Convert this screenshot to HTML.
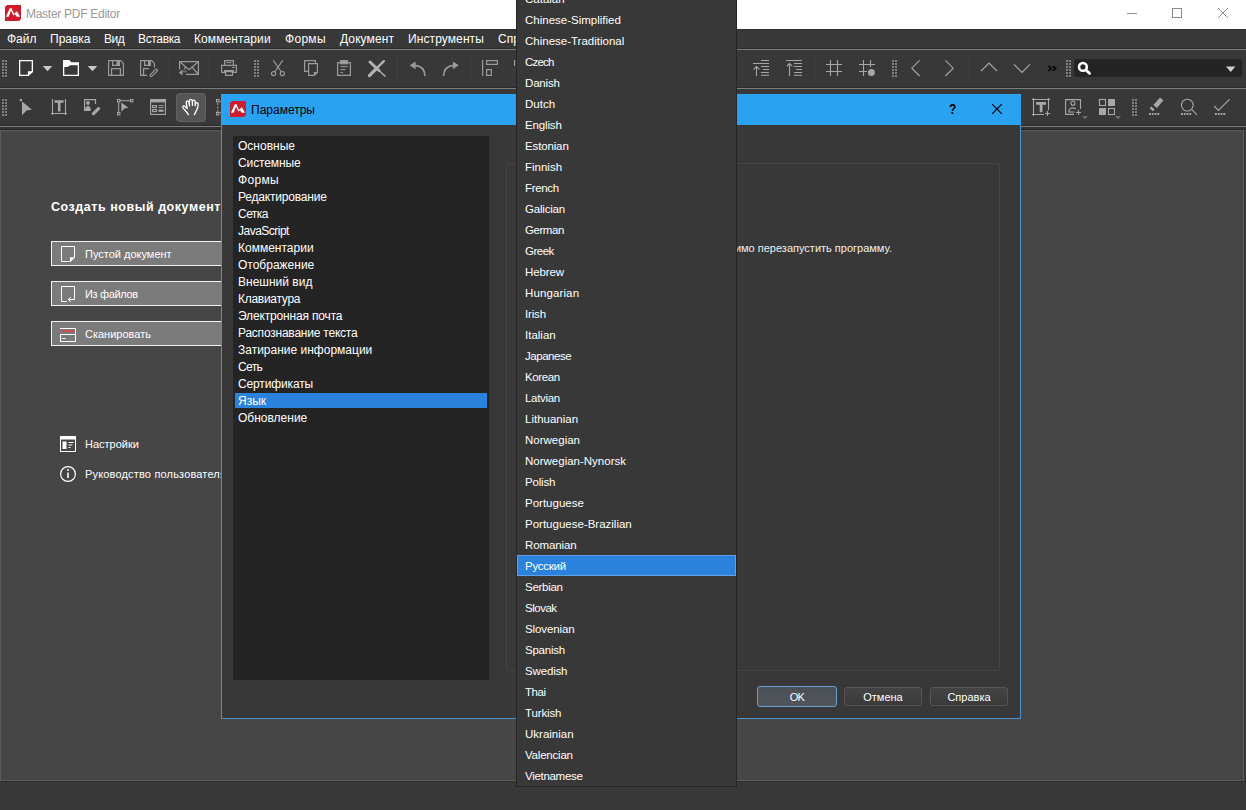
<!DOCTYPE html>
<html lang="ru">
<head>
<meta charset="utf-8">
<title>Master PDF Editor</title>
<style>
*{box-sizing:border-box;margin:0;padding:0}
html,body{width:1246px;height:810px;overflow:hidden;background:#383838}
body{position:relative;font-family:"Liberation Sans",sans-serif;font-size:12px;color:#fff;-webkit-font-smoothing:antialiased}
.abs{position:absolute}
.t{position:absolute;white-space:nowrap;line-height:14px;height:14px}
svg{position:absolute;overflow:visible}
#titlebar{left:0;top:0;width:1246px;height:29px;background:#fff}
#menubar{left:0;top:29px;width:1246px;height:20px;background:#383838}
.hl{position:absolute;left:0;width:1246px;height:2px;background:linear-gradient(#2c2c2c 0 1px,#7c7c7c 1px 2px)}
#main{left:0;top:130px;width:1244px;height:651px;background:#464646;border:1px solid #5c5c5c}
#status{left:0;top:781px;width:1246px;height:29px;background:#383838;border-top:1px solid #2e2e2e}
.m{top:32px;color:#fff;font-size:12px}
.grip{position:absolute;width:5px;height:17px;background-image:radial-gradient(circle,#8a8a8a 0.9px,transparent 1.1px);background-size:3px 2.5px}
.sep{position:absolute;width:1px;height:22px;background:#444}
/* welcome */
.wbtn{position:absolute;left:51px;width:200px;height:25px;background:#7b7b7b;border:1px solid #f2f2f2}
/* dialog */
#dlg{left:221px;top:94px;width:800px;height:625px;background:#383838;border:1px solid #4a93cf}
#dlgtitle{left:-1px;top:-1px;width:800px;height:31px;background:#2aa2f2}
#list{left:11px;top:41px;width:256px;height:544px;background:#242424}
.li{position:absolute;left:5px;font-size:12px;color:#fff;line-height:17px;height:17px;white-space:nowrap}
#grp{left:284px;top:68px;width:494px;height:508px;border:1px solid #434343;border-radius:2px}
.btn{position:absolute;height:19px;border:1px solid #555;border-radius:3px;background:linear-gradient(#444,#3a3a3a);text-align:center;font-size:11px;line-height:19px;color:#fff}
/* dropdown */
#dd{left:516px;top:-13px;width:221px;height:800px;background:#383838;border:1px solid #262626}
.di{position:absolute;left:8px;font-size:11.5px;line-height:21px;height:21px;white-space:nowrap;color:#fff}
</style>
</head>
<body>
<!-- title bar -->
<div id="titlebar" class="abs">
  <svg style="left:5px;top:5px" width="16" height="16" viewBox="0 0 16 16"><path d="M2 0H16V14L14 16H0V2Z" fill="#cf1b2e"/><path d="M0.9 11.8L4.8 3.3H6.6C7.6 5.6 8.4 8 9.8 9.5L8.6 10.4C7.4 9 6.6 7.2 6 5.6L3.7 11.8Z" fill="#fff"/><path d="M9.4 8.3L11.9 6.3L15 11.8H11.8L10.9 10.2L9.9 9.9Z" fill="#fff"/></svg>
  <span class="t" style="left:26px;top:7px;font-size:12px;letter-spacing:-0.28px;color:#999">Master PDF Editor</span>
  <svg style="left:1127px;top:8px" width="10" height="10" viewBox="0 0 10 10"><path d="M0 5.5H10" stroke="#8a8a8a" stroke-width="1" fill="none"/></svg>
  <svg style="left:1172px;top:8px" width="10" height="10" viewBox="0 0 10 10"><rect x="0.5" y="0.5" width="9" height="9" stroke="#8a8a8a" stroke-width="1" fill="none"/></svg>
  <svg style="left:1218px;top:8px" width="10" height="10" viewBox="0 0 10 10"><path d="M0 0L10 10M10 0L0 10" stroke="#8a8a8a" stroke-width="1" fill="none"/></svg>
</div>
<!-- menu bar -->
<div id="menubar" class="abs"></div>
<span class="t m" style="left:7px">Файл</span>
<span class="t m" style="left:50px">Правка</span>
<span class="t m" style="left:104px;letter-spacing:-0.5px">Вид</span>
<span class="t m" style="left:138px;letter-spacing:-0.35px">Вставка</span>
<span class="t m" style="left:194px;letter-spacing:0.1px">Комментарии</span>
<span class="t m" style="left:285px;letter-spacing:0.3px">Формы</span>
<span class="t m" style="left:340px;letter-spacing:0.1px">Документ</span>
<span class="t m" style="left:408px;letter-spacing:0.1px">Инструменты</span>
<span class="t m" style="left:498px">Справка</span>
<div class="hl" style="top:48px"></div>
<div class="hl" style="top:87px"></div>
<div class="hl" style="top:125px"></div>
<div class="abs" style="left:0;top:127px;width:1246px;height:3px;background:linear-gradient(#333 0 2px,#242424 2px 3px)"></div>
<div class="abs" style="left:0;top:29px;width:1246px;height:1px;background:#2e2e2e"></div>
<!-- TOOLBAR1 -->
<svg id="tbsvg" style="left:0;top:0" width="1246" height="810" viewBox="0 0 1246 810" fill="none">
<defs>
  <g id="gp" fill="#808080"><rect x="0" y="0" width="2" height="2"/><rect x="3" y="0" width="2" height="2"/><rect x="0" y="3" width="2" height="2"/><rect x="3" y="3" width="2" height="2"/><rect x="0" y="6" width="2" height="2"/><rect x="3" y="6" width="2" height="2"/><rect x="0" y="9" width="2" height="2"/><rect x="3" y="9" width="2" height="2"/><rect x="0" y="12" width="2" height="2"/><rect x="3" y="12" width="2" height="2"/><rect x="0" y="15" width="2" height="2"/><rect x="3" y="15" width="2" height="2"/></g>
</defs>
<!-- ===== toolbar 1 ===== -->
<g id="tb1">
<use href="#gp" x="2" y="60"/>
<!-- new -->
<path d="M19.65 60.65H32.35V71.6L28.2 75.35H19.65Z" stroke="#fff" stroke-width="1.3"/>
<path d="M32.6 71.3H27.9V75.7Z" fill="#fff"/>
<path d="M42.7 66H52.3L47.5 71.2Z" fill="#c8c8c8"/>
<!-- open -->
<path d="M63 60H69.2L71.3 62.3H79V65.2H70.2L67.6 67H63Z" fill="#fff"/>
<path d="M63.65 64V75.35H78.35V64" stroke="#fff" stroke-width="1.3"/>
<path d="M87.7 66H97.3L92.5 71.2Z" fill="#c8c8c8"/>
<!-- save -->
<g stroke="#9b9b9b" stroke-width="1.2">
<path d="M108.6 60.6H120.6L123.4 63.4V75.4H108.6Z"/>
<path d="M112.6 60.6V65.4H119.4V60.6"/>
<path d="M111.6 75.4V68.6H120.4V75.4"/>
</g>
<rect x="116.5" y="61" width="3" height="4" fill="#9b9b9b"/>
<!-- save as -->
<g stroke="#9b9b9b" stroke-width="1.2">
<path d="M147 75.4H140.6V60.6H151.6L154.4 63.4V67.5"/>
<path d="M144.6 60.6V65.4H150.4V60.6"/>
<path d="M143.6 75.4V68.6H149"/>
<path d="M156.3 70.3L151.2 75.4" stroke-width="3.4" stroke-linecap="round"/>
<path d="M156.2 70.4L151.3 75.3" stroke="#383838" stroke-width="1.1" stroke-linecap="round"/>
</g>
<rect x="148" y="61" width="2.4" height="4" fill="#9b9b9b"/>
<rect x="169" y="56" width="1" height="25" fill="#414141"/>
<!-- mail -->
<g stroke="#9b9b9b" stroke-width="1.2">
<path d="M179.6 69.5V61.6H198.4V74.4H186"/>
<path d="M180 62L189 69.6L198 62"/>
<path d="M192 67.2L198 74"/>
<path d="M186 67.2L184 69"/>
</g>
<path d="M178.8 72.5L182.5 69.6V75.4Z" fill="#9b9b9b"/>
<rect x="183.4" y="70.4" width="1" height="2" fill="#9b9b9b"/><rect x="185.2" y="70.4" width="1" height="2" fill="#9b9b9b"/>
<rect x="209" y="56" width="1" height="25" fill="#414141"/>
<!-- print -->
<g stroke="#9b9b9b" stroke-width="1.2">
<path d="M224.6 65V60.6H233.4V65"/>
<path d="M225 72.4H221.6V65.4H236.4V72.4H233"/>
<path d="M225.6 71V75.4H232.4V71"/>
<path d="M226.5 62.6H231.5" stroke-width="1"/>
</g>
<rect x="224" y="70" width="10" height="2.2" fill="#9b9b9b"/>
<rect x="232" y="67" width="2.6" height="1" fill="#9b9b9b"/>
<use href="#gp" x="254" y="60"/>
<!-- cut -->
<g stroke="#9b9b9b" stroke-width="1.2">
<path d="M273.3 60.4L281.4 72M282.7 60.4L274.6 72"/>
<circle cx="273.6" cy="73.6" r="2.1"/><circle cx="282.4" cy="73.6" r="2.1"/>
</g>
<!-- copy -->
<g stroke="#9b9b9b" stroke-width="1.2">
<path d="M304.6 60.6H315.4V71.4H304.6Z"/>
<path d="M308.6 63.6H317.4V72.4L314.2 75.4H308.6Z" fill="#383838"/>
</g>
<path d="M317.8 72H313.8V75.8Z" fill="#9b9b9b"/>
<!-- paste -->
<g stroke="#9b9b9b" stroke-width="1.2">
<path d="M337.6 62.6H350.4V75.4H337.6Z"/>
<path d="M340.5 66.6H347.5M340.5 69.6H345.5M340.5 72.6H343" stroke-width="1"/>
</g>
<rect x="340" y="60" width="8" height="4.4" fill="#9b9b9b"/>
<!-- delete -->
<g stroke="#b2b2b2" stroke-linecap="round">
<path d="M370 62L379 70.5" stroke-width="3"/><path d="M379 70.5L385.2 76.2" stroke-width="1.4"/>
<path d="M383.8 61.2L376 69" stroke-width="2.4"/><path d="M376 69L369.4 75.6" stroke-width="3.2"/>
</g>
<rect x="397" y="56" width="1" height="25" fill="#414141"/>
<!-- undo -->
<path d="M414.5 65.4Q424.6 66 425 76" stroke="#9b9b9b" stroke-width="1.6"/>
<path d="M409.8 65.3L415.6 61.4V69.2Z" fill="#9b9b9b"/>
<!-- redo -->
<path d="M454 65.4Q443.9 66 443.5 76" stroke="#9b9b9b" stroke-width="1.6"/>
<path d="M458.7 65.3L452.9 61.4V69.2Z" fill="#9b9b9b"/>
<rect x="470" y="56" width="1" height="25" fill="#414141"/>
<!-- align -->
<g stroke="#9b9b9b" stroke-width="1.2">
<path d="M482.6 60V76"/>
<path d="M486.6 60.6H497.4V64.4H486.6Z"/>
<path d="M486.6 69.6H491.4V75.4H486.6Z"/>
<path d="M514.6 60V66"/>
</g>
<!-- right part -->
<g stroke="#a6a6a6" stroke-width="1.1">
<path d="M761 60.5H769M753 63.5H769M761 66.5H769M763 69.5H769M761 72.5H769M761 75.3H769"/>
<path d="M756.5 66.5V76M753.6 69.4L756.5 66.5L759.4 69.4"/>
<path d="M786 60.5H802M794 63.5H802M794 66.5H802M796 69.5H802M794 72.5H802M794 75.3H802"/>
<path d="M789.5 63.5V76M786.6 66.4L789.5 63.5L792.4 66.4"/>
<path d="M830.5 60V76M837.5 60V76M826 64.5H842M826 71.5H842"/>
<path d="M863.5 60V76M870.5 60V67M859 64.5H875M859 71.5H867"/>
</g>
<circle cx="871.4" cy="72.6" r="3.5" fill="#a6a6a6"/>
<rect x="814" y="56" width="1" height="25" fill="#414141"/>
<use href="#gp" x="892" y="60"/>
<g stroke="#a6a6a6" stroke-width="1.1">
<path d="M919.6 60.4L911.8 68.2L919.6 76"/>
<path d="M945.4 60.4L953.2 68.2L945.4 76"/>
<path d="M981 71L989 63L997 71"/>
<path d="M1014 64.4L1022 72.4L1030 64.4"/>
</g>
<rect x="969" y="56" width="1" height="25" fill="#414141"/>
<path d="M1048.3 66L1051.3 68.5L1048.3 71M1052.7 66L1055.7 68.5L1052.7 71" stroke="#000" stroke-width="1.5"/>
<use href="#gp" x="1066" y="60"/>
<rect x="1074" y="59" width="168" height="18" rx="3" fill="#242424"/>
<circle cx="1082.9" cy="66.9" r="3.9" stroke="#fff" stroke-width="2.6"/>
<path d="M1086 70L1089.6 73.4" stroke="#fff" stroke-width="2.8" stroke-linecap="round"/>
<path d="M1226 66.4H1235.4L1230.7 72Z" fill="#d0d0d0"/>
</g>
<!-- ===== toolbar 2 ===== -->
<g id="tb2">
<use href="#gp" x="2" y="99"/>
<!-- pointer -->
<rect x="19.8" y="99" width="2.2" height="2.2" fill="#a8a8a8"/>
<path d="M22 101.4L31.9 109.4L26.5 110.6L22 115.2Z" fill="#a8a8a8"/>
<!-- text tool -->
<path d="M52.5 99V115M65.5 99V115M51 113.5H67" stroke="#a8a8a8" stroke-width="1.1"/>
<path d="M54.6 100.2H63.6V102.8H60.5V111.4H57.9V102.8H54.6Z" fill="#a8a8a8"/>
<!-- image edit -->
<path d="M95.5 104V99.6H84.6V110.4H90.5" stroke="#a8a8a8" stroke-width="1.2"/>
<circle cx="88" cy="102.9" r="1.9" fill="#a8a8a8"/>
<path d="M85.2 110.4V108.2L87.3 105.8H88.6L90.6 108V110.4Z" fill="#a8a8a8"/>
<path d="M98.5 108.7L93.5 113.7" stroke="#a8a8a8" stroke-width="3.2" stroke-linecap="round"/>
<!-- edit object -->
<g stroke="#a8a8a8" stroke-width="1">
<rect x="117.5" y="99.5" width="2.4" height="2.4"/><rect x="130.5" y="99.5" width="2.4" height="2.4"/><rect x="117.5" y="112.5" width="2.4" height="2.4"/>
<path d="M118.7 102V112.5M120 100.7H130.5"/>
</g>
<path d="M121.3 102.4L128.4 107.8L124.4 108.6L121.4 111.8Z" fill="#a8a8a8"/>
<!-- form -->
<g stroke="#a8a8a8" stroke-width="1.1">
<rect x="150.6" y="99.6" width="14.8" height="14.8"/>
<rect x="152.6" y="105.6" width="3.8" height="2"/><rect x="152.6" y="109.6" width="3.8" height="2"/>
<path d="M158.4 105.6H163.6M158.4 107.6H163.6" stroke-width="0.9"/>
</g>
<rect x="150" y="99" width="16" height="3.4" fill="#a8a8a8"/>
<rect x="158.4" y="109.6" width="5.2" height="2.2" fill="#a8a8a8"/>
<!-- hand button -->
<rect x="176.5" y="93.5" width="29" height="28" rx="3" fill="#555" stroke="#626262" stroke-width="1"/>
<g stroke="#fff" stroke-width="1.3" stroke-linecap="round" stroke-linejoin="round">
<path d="M188.4 114.6C187 111.8 184.6 110 183 107.8C182.3 106.4 183.8 105.2 185 106.3L187.2 108.6L186.3 102.6C186.1 100.7 188.4 100.3 188.8 102.1L189.6 105.8"/>
<path d="M189.3 103L189.5 100.6C189.7 98.9 192.1 98.9 192.3 100.6L192.5 105.4"/>
<path d="M192.4 101.4C192.7 99.7 195 99.8 195.2 101.5L195.3 105.8"/>
<path d="M195.4 103.6C195.8 102.2 198 102.4 198.2 104C198.5 107.4 196.4 110.6 194.4 114.6"/>
</g>
<!-- partial -->
<g stroke="#a8a8a8" stroke-width="1">
<rect x="216.5" y="99.5" width="2.4" height="2.4"/><rect x="216.5" y="112.5" width="2.4" height="2.4"/>
<path d="M217.7 103V112" stroke-dasharray="2 1.5"/>
</g>
<rect x="219.6" y="101" width="1.2" height="1.2" fill="#a8a8a8"/><rect x="219.6" y="112" width="1.2" height="1.2" fill="#a8a8a8"/>
<!-- text add -->
<path d="M1033.5 98V116M1048.5 98V110M1032 99.5H1050M1032 114.5H1044" stroke="#a8a8a8" stroke-width="1.1"/>
<path d="M1036 102H1046V104.8H1042.5V112.2H1039.7V104.8H1036Z" fill="#a8a8a8"/>
<path d="M1047.5 111V116M1045 113.5H1050" stroke="#a8a8a8" stroke-width="1.1"/>
<!-- image add -->
<g stroke="#a8a8a8" stroke-width="1.1">
<path d="M1080.5 109V99.6H1065.6V114.4H1074"/>
<circle cx="1073" cy="103.2" r="2"/>
<path d="M1075.8 109C1072.5 106.6 1068.8 108.4 1068.6 112H1074.5"/>
<path d="M1078.5 110V115M1076 112.5H1081"/>
</g>
<path d="M1082 116.2H1088L1085 119Z" fill="#777"/>
<!-- grid -->
<rect x="1099.5" y="99.5" width="6" height="6" stroke="#a8a8a8" stroke-width="1.1"/>
<rect x="1108" y="99" width="7" height="7" fill="#a8a8a8"/>
<rect x="1099" y="108" width="7" height="7" fill="#a8a8a8"/>
<rect x="1108.5" y="108.5" width="6" height="6" stroke="#a8a8a8" stroke-width="1.1"/>
<path d="M1115 116.2H1121L1118 119Z" fill="#777"/>
<use href="#gp" x="1132" y="99"/>
<!-- marker -->
<path d="M1153.4 105L1160 97.6L1163.4 100.5L1156.8 108Z" fill="#a8a8a8"/>
<path d="M1149.7 108.2L1151.4 106.4L1154.6 109.5L1152.9 111.3Z" fill="#a8a8a8"/>
<g fill="#a8a8a8">
<rect x="1149" y="113" width="1.8" height="2"/><rect x="1151.75" y="113" width="1.8" height="2"/><rect x="1154.6" y="113" width="1.8" height="2"/><rect x="1157.4" y="113" width="1.8" height="2"/>
<rect x="1181" y="113" width="1.8" height="2"/><rect x="1183.8" y="113" width="1.8" height="2"/><rect x="1186.6" y="113" width="1.8" height="2"/><rect x="1189.4" y="113" width="1.8" height="2"/>
<rect x="1215" y="113" width="1.8" height="2"/><rect x="1217.8" y="113" width="1.8" height="2"/><rect x="1220.6" y="113" width="1.8" height="2"/><rect x="1223.4" y="113" width="1.8" height="2"/>
</g>
<!-- magnifier -->
<circle cx="1187.3" cy="105.1" r="5.9" stroke="#a8a8a8" stroke-width="1.1"/>
<path d="M1191.6 109.4L1197 114.8" stroke="#a8a8a8" stroke-width="1.1"/>
<!-- check -->
<path d="M1214.2 106L1218.4 110.4L1229.7 99.2" stroke="#a8a8a8" stroke-width="1.1"/>
</g>
</svg>
<!-- /TOOLBARS -->
<!-- main area -->
<div id="main" class="abs"></div>
<div id="status" class="abs"></div>
<!-- WELCOME -->
<div class="t" style="left:51px;top:200px;font-size:12.5px;font-weight:700;letter-spacing:0.54px;color:#fff">Создать новый документ</div>
<div class="wbtn" style="top:241px"></div>
<div class="wbtn" style="top:281px"></div>
<div class="wbtn" style="top:321px"></div>
<span class="t" style="left:85px;top:247px;font-size:11px">Пустой документ</span>
<span class="t" style="left:85px;top:287px;font-size:11px;letter-spacing:-0.35px">Из файлов</span>
<span class="t" style="left:85px;top:327px;font-size:11px">Сканировать</span>
<span class="t" style="left:85px;top:437px;font-size:11px">Настройки</span>
<span class="t" style="left:85px;top:467px;font-size:11px;letter-spacing:0.17px">Руководство пользователя</span>
<svg style="left:0;top:0" width="260" height="520" viewBox="0 0 260 520" fill="none">
<!-- blank doc -->
<path d="M61.5 246.5H74.5V257.6L70.4 261.5H61.5Z" stroke="#fff" stroke-width="1"/>
<path d="M74.8 257.3H70V262Z" fill="#fff"/>
<!-- from files -->
<path d="M67 301.5H61.5V286.5H74.5V299.5H68.5M70.8 297L68.3 299.5L70.8 302" stroke="#fff" stroke-width="1"/>
<!-- scan -->
<path d="M60 328.5H75.5V334" stroke="#fff" stroke-width="1"/>
<rect x="62" y="330" width="12.5" height="2.2" fill="#cc4a56"/>
<rect x="60.5" y="334.5" width="15" height="7" stroke="#fff" stroke-width="1"/>
<path d="M62 338.5H65.5" stroke="#fff" stroke-width="1"/>
<!-- settings -->
<rect x="60.5" y="436.5" width="15" height="15" stroke="#fff" stroke-width="1"/>
<rect x="60" y="436" width="16" height="3.5" fill="#fff"/>
<rect x="62.5" y="441.5" width="4" height="7.5" fill="#fff"/>
<path d="M68.5 442.5H73.5M68.5 445H72.5M68.5 447.5H70.5" stroke="#fff" stroke-width="1.2"/>
<!-- info -->
<circle cx="68" cy="474" r="7.4" stroke="#fff" stroke-width="1.2"/>
<path d="M68 472.4V478" stroke="#fff" stroke-width="1.6"/>
<circle cx="68" cy="470" r="1" fill="#fff"/>
</svg>
<!-- DIALOG -->
<div id="dlg" class="abs">
  <div id="dlgtitle" class="abs">
    <svg style="left:9px;top:7px" width="16" height="16" viewBox="0 0 16 16"><path d="M2 0H16V14L14 16H0V2Z" fill="#cf1b2e"/><path d="M0.9 11.8L4.8 3.3H6.6C7.6 5.6 8.4 8 9.8 9.5L8.6 10.4C7.4 9 6.6 7.2 6 5.6L3.7 11.8Z" fill="#fff"/><path d="M9.4 8.3L11.9 6.3L15 11.8H11.8L10.9 10.2L9.9 9.9Z" fill="#fff"/></svg>
    <span class="t" style="left:30px;top:9px;font-size:12px;color:#000">Параметры</span>
    <span class="t" style="left:728px;top:8px;font-size:14px;color:#000;font-weight:700;transform:scaleX(0.85);transform-origin:0 0">?</span>
    <svg style="left:771px;top:10px" width="10" height="10" viewBox="0 0 10 10"><path d="M0.2 0.2L9.8 9.8M9.8 0.2L0.2 9.8" stroke="#000" stroke-width="1.2" fill="none"/></svg>
  </div>
  <div id="list" class="abs">
  <div class="li" style="top:2px">Основные</div>
  <div class="li" style="top:19px;letter-spacing:-0.11px">Системные</div>
  <div class="li" style="top:36px;letter-spacing:0.32px">Формы</div>
  <div class="li" style="top:53px;letter-spacing:-0.2px">Редактирование</div>
  <div class="li" style="top:70px;letter-spacing:-0.54px">Сетка</div>
  <div class="li" style="top:87px;letter-spacing:-0.51px">JavaScript</div>
  <div class="li" style="top:104px">Комментарии</div>
  <div class="li" style="top:121px">Отображение</div>
  <div class="li" style="top:138px">Внешний вид</div>
  <div class="li" style="top:155px;letter-spacing:-0.28px">Клавиатура</div>
  <div class="li" style="top:172px;letter-spacing:-0.16px">Электронная почта</div>
  <div class="li" style="top:189px;letter-spacing:-0.22px">Распознавание текста</div>
  <div class="li" style="top:206px">Затирание информации</div>
  <div class="li" style="top:223px;letter-spacing:-0.65px">Сеть</div>
  <div class="li" style="top:240px;letter-spacing:-0.14px">Сертификаты</div>
  <div class="abs" style="left:2px;top:257px;width:252px;height:15px;background:#2b82dc"></div>
  <div class="li" style="top:257px">Язык</div>
  <div class="li" style="top:274px">Обновление</div>
  </div>
  <div id="grp" class="abs"></div>
  <div class="abs" style="left:299px;top:146px;width:371px;height:14px;overflow:hidden"><span class="t" style="right:0;top:0;font-size:11px;color:#f0f0f0">Чтобы изменения вступили в силу, необходимо перезапустить программу.</span></div>
  <div class="btn" style="left:535px;top:591px;width:80px;height:21px;border-color:#68a0d6;background:linear-gradient(#4a4f57,#52555b);line-height:21px;letter-spacing:-0.6px">OK</div>
  <div class="btn" style="left:622px;top:592px;width:78px">Отмена</div>
  <div class="btn" style="left:708px;top:592px;width:78px">Справка</div>
</div>
<!-- DROPDOWN -->
<div id="dd" class="abs">
<div class="di" style="top:1px">Catalan</div>
<div class="di" style="top:22px">Chinese-Simplified</div>
<div class="di" style="top:43px">Chinese-Traditional</div>
<div class="di" style="top:64px;letter-spacing:-0.78px">Czech</div>
<div class="di" style="top:85px;letter-spacing:-0.17px">Danish</div>
<div class="di" style="top:106px">Dutch</div>
<div class="di" style="top:127px;letter-spacing:-0.14px">English</div>
<div class="di" style="top:148px;letter-spacing:-0.14px">Estonian</div>
<div class="di" style="top:169px">Finnish</div>
<div class="di" style="top:190px;letter-spacing:-0.33px">French</div>
<div class="di" style="top:211px;letter-spacing:-0.2px">Galician</div>
<div class="di" style="top:232px;letter-spacing:-0.45px">German</div>
<div class="di" style="top:253px;letter-spacing:-0.5px">Greek</div>
<div class="di" style="top:274px;letter-spacing:-0.12px">Hebrew</div>
<div class="di" style="top:295px;letter-spacing:0.12px">Hungarian</div>
<div class="di" style="top:316px;letter-spacing:-0.16px">Irish</div>
<div class="di" style="top:337px">Italian</div>
<div class="di" style="top:358px;letter-spacing:-0.46px">Japanese</div>
<div class="di" style="top:379px;letter-spacing:-0.38px">Korean</div>
<div class="di" style="top:400px;letter-spacing:-0.33px">Latvian</div>
<div class="di" style="top:421px">Lithuanian</div>
<div class="di" style="top:442px">Norwegian</div>
<div class="di" style="top:463px">Norwegian-Nynorsk</div>
<div class="di" style="top:484px;letter-spacing:-0.17px">Polish</div>
<div class="di" style="top:505px">Portuguese</div>
<div class="di" style="top:526px">Portuguese-Brazilian</div>
<div class="di" style="top:547px;letter-spacing:-0.12px">Romanian</div>
<div class="abs" style="left:0;top:567px;width:219px;height:21px;background:#2b82dc;border:1px solid #5fa3e6"></div>
<div class="di" style="top:568px;letter-spacing:-0.25px">Русский</div>
<div class="di" style="top:589px;letter-spacing:-0.29px">Serbian</div>
<div class="di" style="top:610px;letter-spacing:-0.48px">Slovak</div>
<div class="di" style="top:631px;letter-spacing:-0.12px">Slovenian</div>
<div class="di" style="top:652px;letter-spacing:-0.23px">Spanish</div>
<div class="di" style="top:673px;letter-spacing:-0.16px">Swedish</div>
<div class="di" style="top:694px;letter-spacing:-0.4px">Thai</div>
<div class="di" style="top:715px;letter-spacing:-0.14px">Turkish</div>
<div class="di" style="top:736px">Ukrainian</div>
<div class="di" style="top:757px;letter-spacing:-0.21px">Valencian</div>
<div class="di" style="top:778px;letter-spacing:-0.3px">Vietnamese</div>
</div>
</body>
</html>
